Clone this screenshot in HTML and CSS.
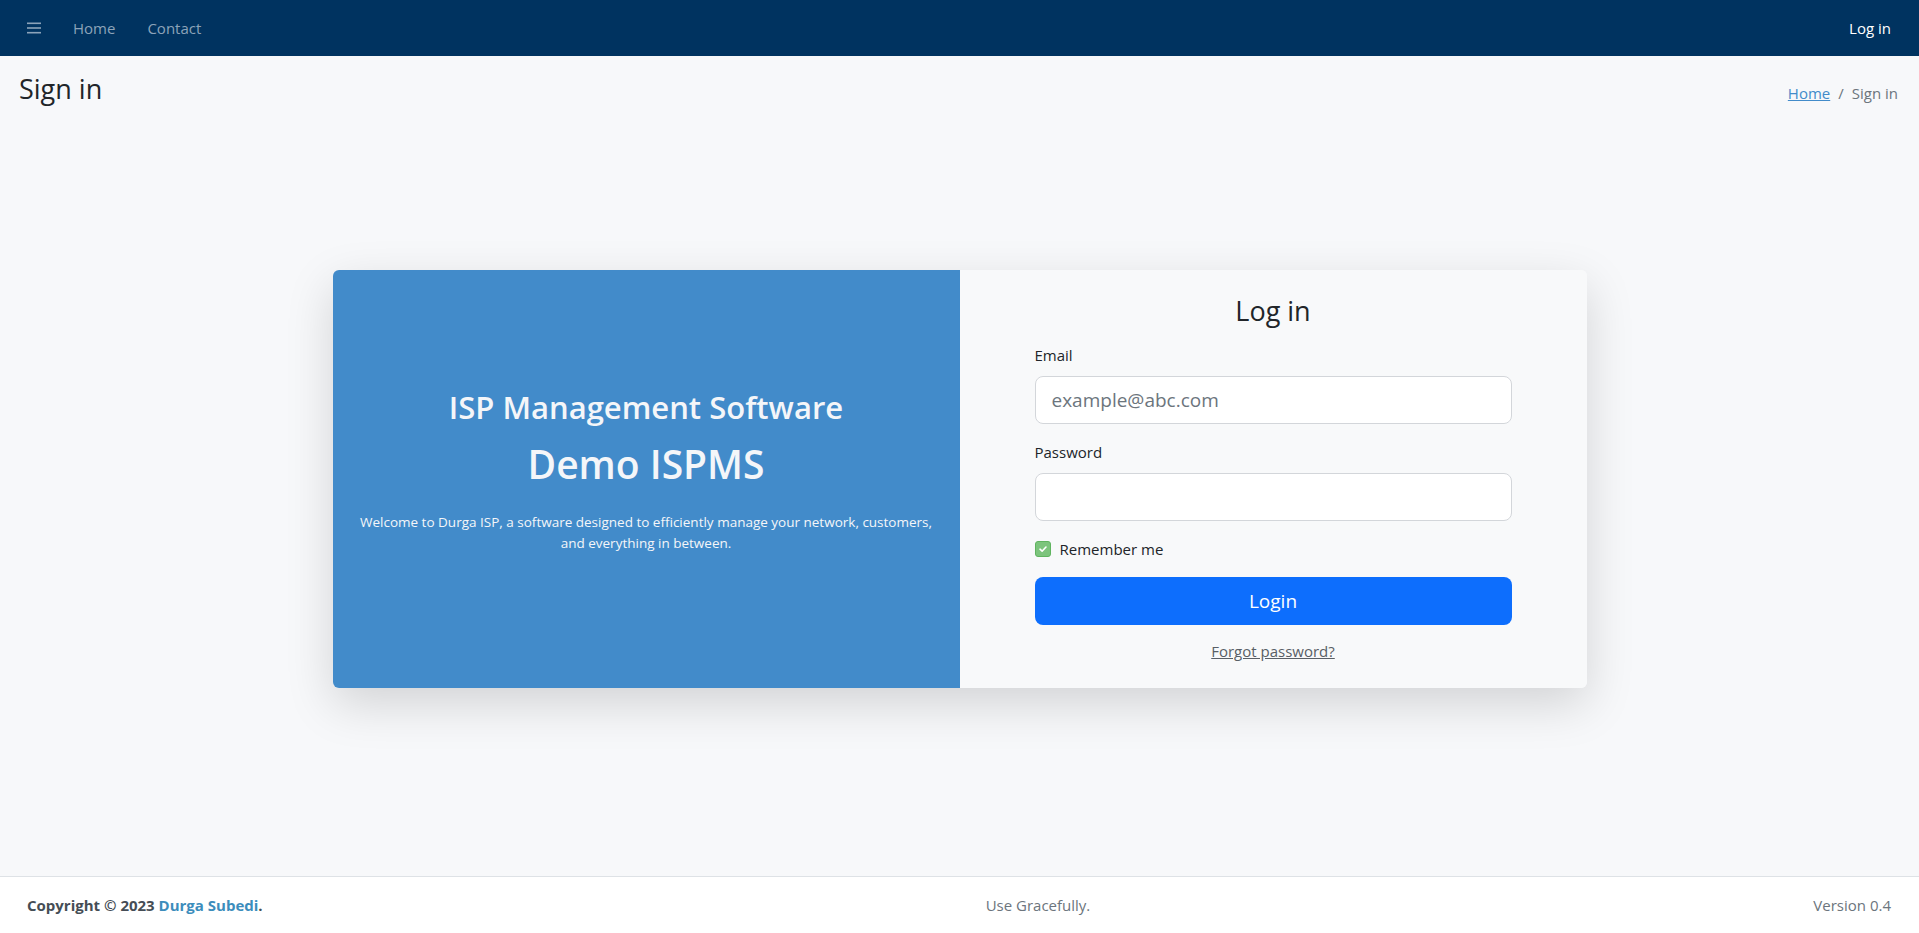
FILE: index.html
```html
<!DOCTYPE html>
<html lang="en">
<head>
    <meta charset="UTF-8">
    <meta name="viewport" content="width=device-width, initial-scale=1.0">
    <title>Sign in - Demo ISPMS</title>
    <link rel="stylesheet" href="styles.css">
</head>
<body>
    <nav class="topbar">
        <ul class="nav-left">
            <li><a href="#" class="nav-link menu-toggle" aria-label="Menu">
                <svg width="14" height="12" viewBox="0 0 14 12"><rect x="0" y="0.5" width="14" height="1.6" fill="currentColor"/><rect x="0" y="5.2" width="14" height="1.6" fill="currentColor"/><rect x="0" y="9.9" width="14" height="1.6" fill="currentColor"/></svg>
            </a></li>
            <li><a href="#" class="nav-link">Home</a></li>
            <li><a href="#" class="nav-link">Contact</a></li>
        </ul>
        <a href="#" class="nav-link login-link">Log in</a>
    </nav>

    <main class="content">
        <div class="content-header">
            <h1>Sign in</h1>
            <ol class="breadcrumb">
                <li><a href="#">Home</a></li>
                <li class="sep">/</li>
                <li class="active">Sign in</li>
            </ol>
        </div>

        <div class="login-card">
            <div class="intro">
                <h3>ISP Management Software</h3>
                <h1>Demo ISPMS</h1>
                <p>Welcome to Durga ISP, a software designed to efficiently manage your network, customers, and everything in between.</p>
            </div>
            <div class="login-pane">
                <h3>Log in</h3>
                <form id="loginForm">
                    <label for="loginEmail">Email</label>
                    <input type="email" id="loginEmail" placeholder="example@abc.com">

                    <label for="loginPassword">Password</label>
                    <input type="password" id="loginPassword">

                    <div class="remember">
                        <span class="check">
                            <svg width="10" height="10" viewBox="0 0 10 10"><path d="M2 5.2 L4.1 7.2 L8 3" fill="none" stroke="#fff" stroke-width="1.6" stroke-linecap="round" stroke-linejoin="round"/></svg>
                        </span>
                        <span>Remember me</span>
                    </div>

                    <button type="button">Login</button>
                    <a href="#" class="forgot">Forgot password?</a>
                </form>
            </div>
        </div>
    </main>

    <footer class="footer">
        <div class="copy"><strong>Copyright &copy; 2023 <a href="#">Durga Subedi</a>.</strong></div>
        <div>Use Gracefully.</div>
        <div>Version 0.4</div>
    </footer>
</body>
</html>
```

FILE: styles.css
```css
body {
    font-family: "Open Sans", Arial, sans-serif;
    font-size: 15px;
    line-height: 24px;
    color: #212529;
    background-color: #f7f8fa;
    margin: 0;
    padding: 0;
    display: flex;
    flex-direction: column;
    min-height: 100vh;
}

a {
    color: #428bca;
}

/* top navigation */
.topbar {
    background-color: #003360;
    height: 56px;
    display: flex;
    align-items: center;
    justify-content: space-between;
    padding: 0 12px 0 11px;
}

.nav-left {
    list-style: none;
    margin: 0;
    padding: 0;
    display: flex;
    align-items: center;
}

.nav-link {
    display: block;
    padding: 0 16px;
    color: #8ca3b9;
    text-decoration: none;
}

.menu-toggle {
    display: flex;
    align-items: center;
    height: 24px;
}

.login-link {
    color: #fff;
}

/* page content */
.content {
    flex: 1;
}

.content-header {
    display: flex;
    justify-content: space-between;
    align-items: baseline;
    padding: 16px 21px 14px 19px;
}

.content-header h1 {
    margin: 0;
    font-size: 27px;
    font-weight: 400;
    line-height: 34px;
}

.breadcrumb {
    list-style: none;
    margin: 0;
    padding: 0;
    display: flex;
    gap: 8px;
    color: #6c757d;
}

.breadcrumb .sep {
    color: #6c757d;
}

.login-card {
    width: 1254px;
    height: 418px;
    margin: 150px auto 0;
    display: grid;
    grid-template-columns: 1fr 1fr;
    border-radius: 6px;
    overflow: hidden;
    box-shadow: 0 16px 48px rgba(0, 0, 0, 0.15);
}

.intro {
    background-color: #428bca;
    color: #f4f6f9;
    text-align: center;
    display: flex;
    flex-direction: column;
    justify-content: center;
    padding: 0 24px 16px;
}

.intro h3 {
    margin: 0 0 15px;
    font-size: 31px;
    font-weight: 600;
    line-height: 36px;
}

.intro h1 {
    margin: 0 0 24px;
    font-size: 39px;
    font-weight: 600;
    line-height: 48px;
}

.intro p {
    margin: 0;
    font-size: 13.5px;
    line-height: 21px;
}

.login-pane {
    background-color: #f8f9fa;
    padding: 24px 0 0;
    text-align: center;
}

.login-pane h3 {
    margin: 0 0 15px;
    font-size: 27px;
    font-weight: 400;
    line-height: 34px;
}

form {
    width: 477px;
    margin: 0 auto;
    text-align: left;
}

label {
    display: block;
    margin-bottom: 9px;
}

input {
    display: block;
    width: 100%;
    height: 48px;
    padding: 8px 16px;
    margin: 0 0 16px;
    font-family: inherit;
    font-size: 19px;
    border: 1px solid #d3d6da;
    border-radius: 8px;
    background: #fff;
    box-sizing: border-box;
}

input::placeholder {
    color: #6c757d;
}

.remember {
    display: flex;
    align-items: center;
    gap: 9px;
    margin-bottom: 16px;
}

.check {
    width: 16px;
    height: 16px;
    box-sizing: border-box;
    border: 1px solid #5fb45f;
    border-radius: 3px;
    background-color: #7cc47c;
    display: flex;
    align-items: center;
    justify-content: center;
}

button {
    display: block;
    width: 100%;
    height: 48px;
    background-color: #0d6efd;
    color: white;
    font-family: inherit;
    font-size: 19px;
    border: none;
    border-radius: 8px;
    cursor: pointer;
}

.forgot {
    display: block;
    width: max-content;
    margin: 14px auto 0;
    color: #595f66;
}

/* footer */
.footer {
    height: 56px;
    border-top: 1px solid #dee2e6;
    background-color: #fff;
    display: flex;
    align-items: center;
    justify-content: space-between;
    padding: 0 28px 0 27px;
    color: #6c757d;
}

.copy {
    color: #454d55;
}

.copy a {
    color: #3c8dbc;
    text-decoration: none;
}
```
